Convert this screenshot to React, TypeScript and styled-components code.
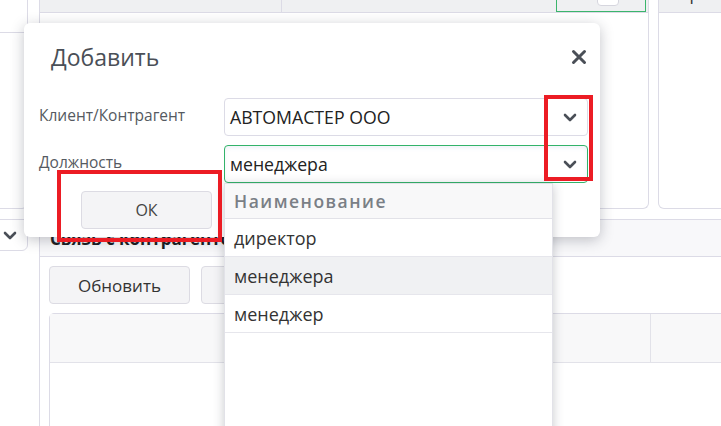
import styled, { createGlobalStyle } from "styled-components";

const GlobalStyle = createGlobalStyle`
  html, body {
    margin: 0;
    padding: 0;
    background: #ffffff;
    overflow: hidden;
  }
  body {
    width: 721px;
    height: 426px;
    position: relative;
    font-family: "Open Sans", "Liberation Sans", sans-serif;
    color: #333;
  }
`;

const Page = styled.div`
  display: grid;
  grid-template-columns: 30px 800px;
  column-gap: 11px;
  margin: -25px 0 0 -2px;
`;

const Sidebar = styled.div`
  display: flex;
  flex-direction: column;
  gap: 10px;
`;

const SideTop = styled.div`
  height: 233px;
  border: 1px solid #dcdbe6;
  border-top: none;
  border-radius: 0 0 6px 0;
`;

const SideHead = styled.div`
  height: 57px;
  border-bottom: 1px solid #dcdbe6;
`;

const SideBottom = styled.div`
  height: 30px;
  border: 1px solid #dcdbe6;
  border-radius: 0 0 6px 0;
  display: flex;
  align-items: center;
  padding-left: 4px;
  color: #4a4f57;
`;

const MainCol = styled.div`
  display: flex;
  flex-direction: column;
  gap: 10px;
`;

const TopRow = styled.div`
  display: flex;
  gap: 9px;
  height: 234px;
`;

const Card = styled.div<{ $w?: number }>`
  ${(p) => (p.$w ? `width: ${p.$w}px;` : "flex: 1;")}
  border: 1px solid #dcdbe6;
  border-top: none;
  border-radius: 0 0 6px 6px;
  overflow: hidden;
`;

const GrayRow = styled.div`
  height: 37px;
  background: #eff0f2;
  border-bottom: 1px solid #dcdbe6;
  display: flex;
  align-items: center;
  font-size: 17px;
  color: #333;
`;

const Cell = styled.div<{ $w?: number; $divider?: boolean; $indent?: number }>`
  ${(p) => (p.$w ? `width: ${p.$w}px;` : "flex: 1;")}
  height: 100%;
  display: flex;
  align-items: center;
  padding-left: ${(p) => p.$indent ?? 10}px;
  box-sizing: border-box;
  border-right: ${(p) => (p.$divider ? "1px solid #dcdbe6" : "none")};
  white-space: nowrap;
  overflow: hidden;
`;

const GreenCell = styled.div`
  width: 90px;
  height: 100%;
  margin-left: auto;
  margin-right: 2px;
  box-sizing: border-box;
  border: 1px solid #3bb56c;
  display: flex;
  justify-content: center;
  align-items: center;
  padding-left: 14px;
`;

const Check = styled.div`
  width: 20px;
  height: 16px;
  background: #fff;
  border: 1px solid #d6d6de;
  border-radius: 4px;
  margin-top: 6px;
`;

const LowerPanel = styled.div`
  border-top: 1px solid #dcdbe6;
  border-left: 1px solid #dcdbe6;
  height: 260px;
`;

const PanelHead = styled.div`
  height: 36px;
  background: #f8f8fa;
  border-bottom: 1px solid #dcdbe6;
  display: flex;
  align-items: center;
  padding-left: 10px;
  font-size: 17px;
  font-weight: 700;
  color: #1a1d22;
`;

const PanelBody = styled.div`
  padding: 9px 9px;
  display: flex;
  flex-direction: column;
  gap: 9px;
`;

const Toolbar = styled.div`
  display: flex;
  gap: 11px;
`;

const Button = styled.button<{ $w: number }>`
  width: ${(p) => p.$w}px;
  height: 38px;
  background: #f4f4f6;
  border: 1px solid #dcdbe3;
  border-radius: 4px;
  font-family: "Open Sans", "Liberation Sans", sans-serif;
  font-size: 17px;
  color: #333;
  padding: 0;
`;

const Table = styled.div`
  border: 1px solid #dcdbe6;
  border-radius: 5px 5px 0 0;
  height: 200px;
`;

const TableHead = styled.div`
  height: 48px;
  background: #f8f8f9;
  border-bottom: 1px solid #e2e2e9;
  display: flex;
`;

const HeadCol = styled.div<{ $w?: number }>`
  ${(p) => (p.$w ? `width: ${p.$w}px;` : "flex: 1;")}
  border-right: 1px solid #e2e2e9;
`;

/* modal */

const Modal = styled.div`
  position: absolute;
  left: 24px;
  top: 23px;
  width: 576px;
  height: 214px;
  background: #fff;
  border-radius: 6px;
  box-shadow: 0 3px 14px rgba(40, 44, 60, 0.28);
  display: flex;
  flex-direction: column;
  z-index: 10;
`;

const ModalHeader = styled.div`
  height: 75px;
  box-sizing: border-box;
  padding: 19px 13px 0 27px;
  display: flex;
  justify-content: space-between;
  align-items: flex-start;
`;

const Title = styled.div`
  font-size: 23px;
  line-height: 30px;
  color: #4a4f57;
`;

const Close = styled.div`
  height: 30px;
  display: flex;
  align-items: center;
  color: #4a4f57;
`;

const Form = styled.div`
  display: grid;
  grid-template-columns: 185px 1fr;
  row-gap: 9px;
  padding: 0 12px 0 15px;
`;

const Label = styled.div`
  font-size: 15.5px;
  color: #555a61;
  display: flex;
  align-items: center;
  padding-bottom: 5px;
`;

const Field = styled.div<{ $active?: boolean }>`
  position: relative;
  height: 38px;
  box-sizing: border-box;
  border: 1px solid ${(p) => (p.$active ? "#33b36a" : "#dcdbe6")};
  border-radius: 4px;
  box-shadow: ${(p) => (p.$active ? "inset 0 2px 4px rgba(120, 150, 200, 0.12)" : "none")};
  display: flex;
  align-items: center;
  justify-content: space-between;
  padding: 0 10px 0 5px;
  font-size: 17.7px;
  color: #222;
`;

const Footer = styled.div`
  padding: 8px 0 0 57px;
`;

const OkButton = styled.button`
  width: 131px;
  height: 38px;
  background: #f4f4f6;
  border: 1px solid #dcdbe3;
  border-radius: 4px;
  font-family: "Open Sans", "Liberation Sans", sans-serif;
  font-size: 16px;
  color: #444;
  padding: 0;
`;

const Dropdown = styled.div`
  position: absolute;
  left: -1px;
  top: 37px;
  width: 327px;
  height: 260px;
  background: #fff;
  border: 1px solid #e2e2e8;
  box-shadow: 0 2px 10px rgba(40, 44, 60, 0.25);
  z-index: 20;
`;

const DropHead = styled.div`
  height: 34px;
  background: #f8f8f9;
  border-bottom: 1px solid #e2e2e8;
  display: flex;
  align-items: center;
  padding-left: 9px;
  font-size: 17.5px;
  font-weight: 600;
  letter-spacing: 1.5px;
  color: #7a7f86;
`;

const DropItem = styled.div<{ $hover?: boolean }>`
  height: 37px;
  border-bottom: 1px solid #e6e6ec;
  background: ${(p) => (p.$hover ? "#f0f1f3" : "#fff")};
  display: flex;
  align-items: center;
  padding-left: 9px;
  font-size: 18px;
  color: #333;
`;

const Mark = styled.div<{ $x: number; $y: number; $w: number; $h: number }>`
  position: absolute;
  left: ${(p) => p.$x}px;
  top: ${(p) => p.$y}px;
  width: ${(p) => p.$w}px;
  height: ${(p) => p.$h}px;
  box-sizing: border-box;
  border: 4px solid #ec1c24;
  z-index: 30;
`;

function Chevron() {
  return (
    <svg width="14" height="9" viewBox="0 0 14 9">
      <polyline
        points="2,2 7,7 12,2"
        fill="none"
        stroke="#4a4f57"
        strokeWidth="2.6"
        strokeLinecap="round"
        strokeLinejoin="round"
      />
    </svg>
  );
}

function CloseIcon() {
  return (
    <svg width="16" height="16" viewBox="0 0 16 16">
      <path
        d="M2.5 2.5 L13.5 13.5 M13.5 2.5 L2.5 13.5"
        stroke="#4a4f57"
        strokeWidth="3"
        strokeLinecap="round"
      />
    </svg>
  );
}

const positions = ["директор", "менеджера", "менеджер"];

export default function App() {
  return (
    <>
      <GlobalStyle />
      <Page>
        <Sidebar>
          <SideTop>
            <SideHead />
          </SideTop>
          <SideBottom>
            <Chevron />
          </SideBottom>
        </Sidebar>

        <MainCol>
          <TopRow>
            <Card $w={608}>
              <GrayRow>
                <Cell $w={242} $divider>
                  Мобильный
                </Cell>
                <Cell $w={200} $indent={23}>
                  79211111111
                </Cell>
                <GreenCell>
                  <Check />
                </GreenCell>
              </GrayRow>
            </Card>
            <Card>
              <GrayRow>
                <Cell>Корпоративный</Cell>
              </GrayRow>
            </Card>
          </TopRow>

          <LowerPanel>
            <PanelHead>Связь с контрагентом</PanelHead>
            <PanelBody>
              <Toolbar>
                <Button $w={141}>Обновить</Button>
                <Button $w={141}>Добавить</Button>
              </Toolbar>
              <Table>
                <TableHead>
                  <HeadCol $w={600} />
                  <HeadCol />
                </TableHead>
              </Table>
            </PanelBody>
          </LowerPanel>
        </MainCol>
      </Page>

      <Modal>
        <ModalHeader>
          <Title>Добавить</Title>
          <Close>
            <CloseIcon />
          </Close>
        </ModalHeader>
        <Form>
          <Label>Клиент/Контрагент</Label>
          <Field>
            АВТОМАСТЕР ООО
            <Chevron />
          </Field>
          <Label>Должность</Label>
          <Field $active>
            менеджера
            <Chevron />
            <Dropdown>
              <DropHead>Наименование</DropHead>
              {positions.map((p) => (
                <DropItem key={p} $hover={p === "менеджера"}>
                  {p}
                </DropItem>
              ))}
            </Dropdown>
          </Field>
        </Form>
        <Footer>
          <OkButton>ОК</OkButton>
        </Footer>
      </Modal>

      <Mark $x={544} $y={95} $w={49} $h={86} />
      <Mark $x={57} $y={170} $w={165} $h={72} />
    </>
  );
}
